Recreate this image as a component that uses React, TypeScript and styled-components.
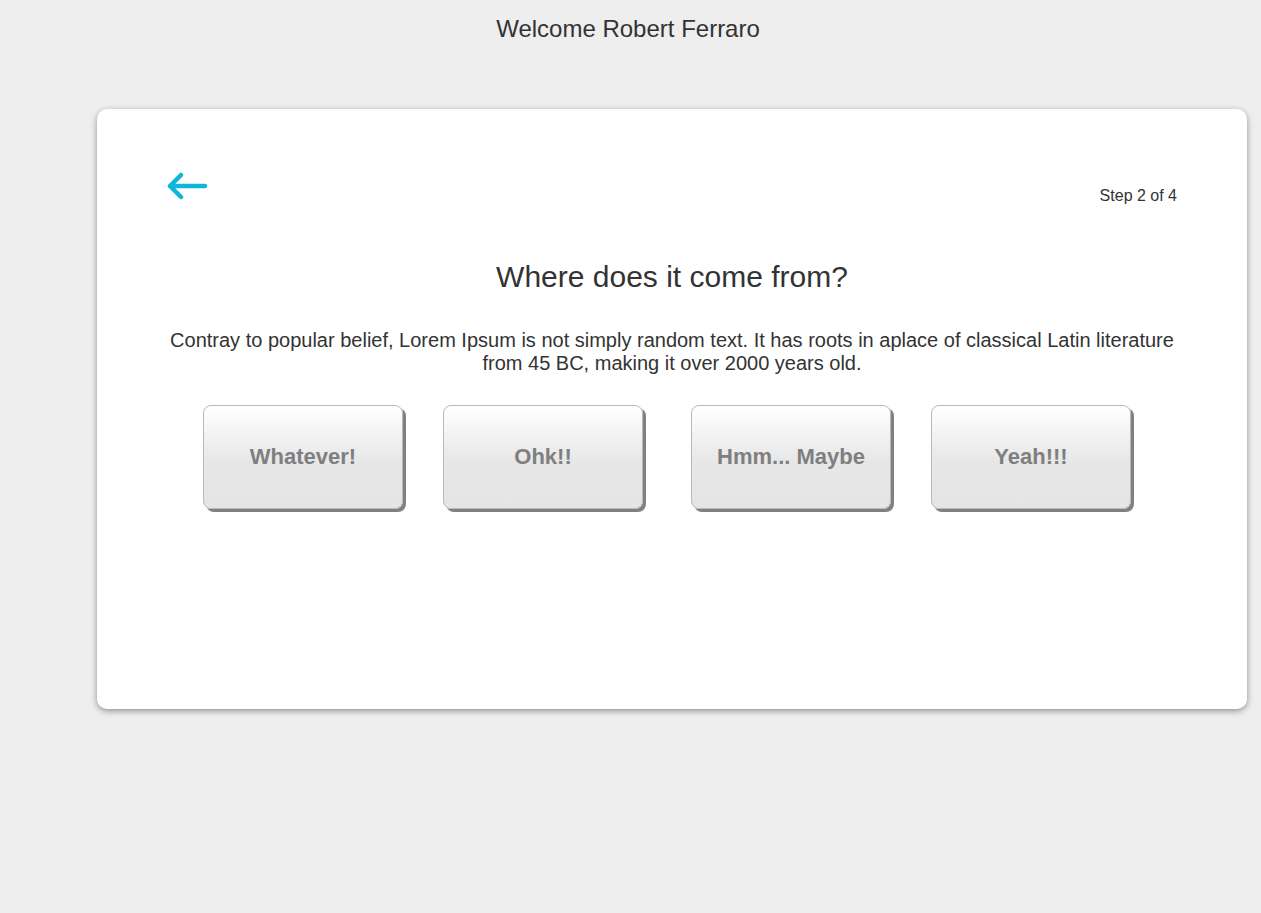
import React from "react";
import styled, { createGlobalStyle } from "styled-components";

const Global = createGlobalStyle`
  html, body { margin: 0; padding: 0; background: #eeeeee; }
  body { font-family: "Liberation Sans", Arial, sans-serif; color: #333; }
`;

const Page = styled.div`
  min-height: 913px;
  background: #eeeeee;
  padding-top: 15px;
  box-sizing: border-box;
`;

const Welcome = styled.h1`
  margin: 0 5px 0 0;
  font-size: 24px;
  line-height: 28px;
  font-weight: normal;
  text-align: center;
  color: #333;
`;

const Card = styled.div`
  margin: 66px 0 0 97px;
  width: 1150px;
  height: 600px;
  box-sizing: border-box;
  background: #fff;
  border-radius: 10px;
  box-shadow: 0 2px 6px rgba(0, 0, 0, 0.4);
  padding: 60px 70px 0;
`;

const TopRow = styled.div`
  display: flex;
  justify-content: space-between;
  align-items: flex-start;
  height: 60px;
`;

const BackButton = styled.button`
  background: none;
  border: none;
  padding: 0;
  margin: 3px 0 0;
  cursor: pointer;
  display: block;
  width: 42px;
  height: 30px;
`;

const Step = styled.div`
  font-size: 16px;
  line-height: 18px;
  color: #333;
  margin-top: 18px;
`;

const Title = styled.h2`
  margin: 31px 0 0;
  font-size: 30px;
  line-height: 34px;
  font-weight: normal;
  text-align: center;
  color: #333;
`;

const Lead = styled.p`
  margin: 35px 0 0;
  font-size: 20px;
  line-height: 23px;
  text-align: center;
  color: #333;
`;

const Choices = styled.div`
  display: flex;
  margin-top: 30px;
  padding-left: 36px;
  gap: 40px;
`;

const Choice = styled.button<{ $extra?: number }>`
  width: 200px;
  height: 104px;
  margin-left: ${(p) => p.$extra ?? 0}px;
  box-sizing: border-box;
  border: 1px solid #b9b9b9;
  border-radius: 8px;
  background: linear-gradient(to bottom, #ffffff 0%, #e7e7e7 55%, #e5e5e5 100%);
  box-shadow: 3px 3px 0 #808080;
  font-family: "Liberation Sans", Arial, sans-serif;
  font-weight: bold;
  font-size: 22px;
  color: #7f7f7f;
  cursor: pointer;
  padding: 0;
`;

const Arrow = () => (
  <svg width="42" height="30" viewBox="0 0 42 30" fill="none">
    <path
      d="M3 14 H38 M14 3 L3 14 L14 25"
      stroke="#12b5da"
      strokeWidth="4.5"
      strokeLinecap="round"
      strokeLinejoin="round"
    />
  </svg>
);

export default function App() {
  return (
    <>
      <Global />
      <Page>
        <Welcome>Welcome Robert Ferraro</Welcome>
        <Card>
          <TopRow>
            <BackButton aria-label="Back">
              <Arrow />
            </BackButton>
            <Step>Step 2 of 4</Step>
          </TopRow>
          <Title>Where does it come from?</Title>
          <Lead>
            Contray to popular belief, Lorem Ipsum is not simply random text. It has roots in aplace of classical Latin
            literature from 45 BC, making it over 2000 years old.
          </Lead>
          <Choices>
            <Choice>Whatever!</Choice>
            <Choice>Ohk!!</Choice>
            <Choice $extra={8}>Hmm... Maybe</Choice>
            <Choice>Yeah!!!</Choice>
          </Choices>
        </Card>
      </Page>
    </>
  );
}
